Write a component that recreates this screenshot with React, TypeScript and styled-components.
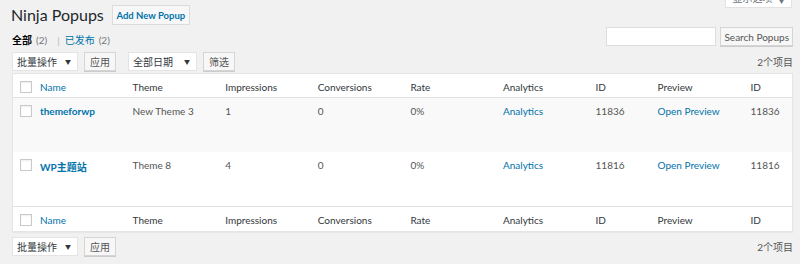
import { FC } from 'react';
import styled, { createGlobalStyle } from 'styled-components';

const GlobalStyle = createGlobalStyle`
  html, body {
    margin: 0;
    padding: 0;
    background: #f1f1f1;
  }
  body {
    font-family: Lato, "Noto Sans CJK SC", sans-serif;
    font-size: 10px;
    color: #444;
  }
`;

const Wrap = styled.div`
  position: relative;
  width: 800px;
  height: 264px;
  padding: 0 7px 0 12px;
  box-sizing: border-box;
  overflow: hidden;
`;

const ScreenOptions = styled.div`
  position: absolute;
  top: -11px;
  right: 8px;
  width: 67px;
  height: 19px;
  box-sizing: border-box;
  background: #fff;
  border: 1px solid #e2e2e2;
  border-top: none;
  color: #72777c;
  font-size: 10px;
  display: flex;
  align-items: flex-end;
  justify-content: center;
  padding-bottom: 2px;
  gap: 6px;
`;

const Arrow = styled.span`
  font-size: 6px;
`;

const TitleRow = styled.div`
  display: flex;
  align-items: center;
  gap: 8px;
  height: 30px;
  margin-left: -1px;
`;

const Title = styled.h1`
  margin: 0;
  font-size: 16px;
  font-weight: 400;
  color: #23282d;
  line-height: 30px;
`;

const AddButton = styled.span`
  display: inline-flex;
  align-items: center;
  justify-content: center;
  width: 78px;
  height: 20px;
  box-sizing: border-box;
  border: 1px solid #dcdcdc;
  background: #f7f7f7;
  color: #0073aa;
  font-weight: 700;
  font-size: 9.5px;
`;

const FilterLine = styled.div`
  display: flex;
  align-items: flex-end;
  justify-content: space-between;
  height: 19px;
  margin-top: -3px;
`;

const Subsub = styled.div`
  display: flex;
  align-items: center;
  margin-bottom: -1px;
`;

const SubItem = styled.span<{ $current?: boolean }>`
  color: ${props => (props.$current ? '#000' : '#0073aa')};
  font-weight: ${props => (props.$current ? 700 : 400)};
`;

const Count = styled.span`
  color: #72777c;
  margin: 0 10px 0 4px;
`;

const Sep = styled.span`
  color: #bbb;
  margin-right: 5px;
`;

const SearchBox = styled.div`
  display: flex;
  gap: 4px;
`;

const SearchInput = styled.div`
  width: 110px;
  height: 19px;
  background: #fff;
  border: 1px solid #ddd;
  box-sizing: border-box;
`;

const Button = styled.span<{ $pad?: number }>`
  display: inline-flex;
  align-items: center;
  justify-content: center;
  height: 19px;
  box-sizing: border-box;
  padding: 0 ${props => props.$pad ?? 5}px;
  border: 1px solid #d5d5d5;
  background: #f7f7f7;
  color: #555;
  font-size: 10px;
  box-shadow: 0 1px 0 #ccc;
`;

const NavRow = styled.div<{ $gap: number }>`
  display: flex;
  align-items: center;
  justify-content: space-between;
  height: 19px;
  margin-top: ${props => props.$gap}px;
`;

const Actions = styled.div`
  display: flex;
  align-items: center;
`;

const Select = styled.span<{ $width: number }>`
  display: inline-flex;
  align-items: center;
  justify-content: space-between;
  width: ${props => props.$width}px;
  height: 19px;
  box-sizing: border-box;
  padding: 0 6px 0 4px;
  background: #fff;
  border: 1px solid #e4e4e4;
  color: #32373c;
  font-size: 10px;
  margin-right: 6px;

  &::after {
    content: '▼';
    font-size: 6px;
    color: #32373c;
  }
`;

const ActionGroup = styled.div`
  display: flex;
  align-items: center;
  margin-right: 12px;
`;

const ItemCount = styled.span`
  color: #555;
  font-size: 10px;
`;

const Table = styled.div`
  margin-top: 2px;
  background: #fff;
  border: 1px solid #e5e5e5;
  box-shadow: 0 1px 1px rgba(0, 0, 0, 0.04);
`;

const Row = styled.div<{ $height: number; $alt?: boolean; $line?: 'top' | 'bottom' }>`
  display: grid;
  grid-template-columns: 19px repeat(6, 92.6px) 62px 93px 1fr;
  height: ${props => props.$height}px;
  box-sizing: border-box;
  background: ${props => (props.$alt ? '#f9f9f9' : '#fff')};
  ${props => props.$line === 'bottom' && 'border-bottom: 1px solid #e1e1e1;'}
  ${props => props.$line === 'top' && 'border-top: 1px solid #e1e1e1;'}
`;

const Cell = styled.div<{ $head?: boolean; $link?: boolean; $bold?: boolean }>`
  padding: 7px 8px 0;
  color: ${props => (props.$link ? '#0073aa' : props.$head ? '#32373c' : '#555')};
  font-weight: ${props => (props.$bold ? 700 : 400)};
  font-size: 10px;
  white-space: nowrap;
`;

const CheckCell = styled.div`
  padding: 7px 0 0 7px;
`;

const Check = styled.span`
  display: block;
  width: 12px;
  height: 12px;
  box-sizing: border-box;
  border: 1px solid #c9c9c9;
  background: #fff;
  box-shadow: inset 0 1px 2px rgba(0, 0, 0, 0.07);
`;

const headers = ['Theme', 'Impressions', 'Conversions', 'Rate', 'Analytics', 'ID', 'Preview', 'ID'];

const rows = [
  { name: 'themeforwp', theme: 'New Theme 3', impressions: '1', conversions: '0', rate: '0%', id: '11836' },
  { name: 'WP主题站', theme: 'Theme 8', impressions: '4', conversions: '0', rate: '0%', id: '11816' },
];

const HeadRow: FC<{ line: 'top' | 'bottom'; height: number }> = ({ line, height }) => (
  <Row $height={height} $line={line}>
    <CheckCell>
      <Check />
    </CheckCell>
    <Cell $head $link>
      Name
    </Cell>
    {headers.map((h, i) => (
      <Cell key={i} $head>
        {h}
      </Cell>
    ))}
  </Row>
);

const BulkActions: FC<{ withFilter?: boolean }> = ({ withFilter }) => (
  <Actions>
    <ActionGroup>
      <Select $width={66}>批量操作</Select>
      <Button>应用</Button>
    </ActionGroup>
    {withFilter && (
      <ActionGroup>
        <Select $width={69}>全部日期</Select>
        <Button>筛选</Button>
      </ActionGroup>
    )}
  </Actions>
);

export default function App() {
  return (
    <>
      <GlobalStyle />
      <Wrap>
        <ScreenOptions>
          <span>显示选项</span>
          <Arrow>▼</Arrow>
        </ScreenOptions>
        <TitleRow>
          <Title>Ninja Popups</Title>
          <AddButton>Add New Popup</AddButton>
        </TitleRow>
        <FilterLine>
          <Subsub>
            <SubItem $current>全部</SubItem>
            <Count>(2)</Count>
            <Sep>|</Sep>
            <SubItem>已发布</SubItem>
            <Count>(2)</Count>
          </Subsub>
          <SearchBox>
            <SearchInput />
            <Button $pad={3}>Search Popups</Button>
          </SearchBox>
        </FilterLine>
        <NavRow $gap={6}>
          <BulkActions withFilter />
          <ItemCount>2个项目</ItemCount>
        </NavRow>
        <Table>
          <HeadRow line="bottom" height={24} />
          {rows.map((r, i) => (
            <Row key={r.id} $height={54} $alt={i === 0}>
              <CheckCell>
                <Check />
              </CheckCell>
              <Cell $link $bold>
                {r.name}
              </Cell>
              <Cell>{r.theme}</Cell>
              <Cell>{r.impressions}</Cell>
              <Cell>{r.conversions}</Cell>
              <Cell>{r.rate}</Cell>
              <Cell $link>Analytics</Cell>
              <Cell>{r.id}</Cell>
              <Cell $link>Open Preview</Cell>
              <Cell>{r.id}</Cell>
            </Row>
          ))}
          <HeadRow line="top" height={25} />
        </Table>
        <NavRow $gap={5}>
          <BulkActions />
          <ItemCount>2个项目</ItemCount>
        </NavRow>
      </Wrap>
    </>
  );
}
